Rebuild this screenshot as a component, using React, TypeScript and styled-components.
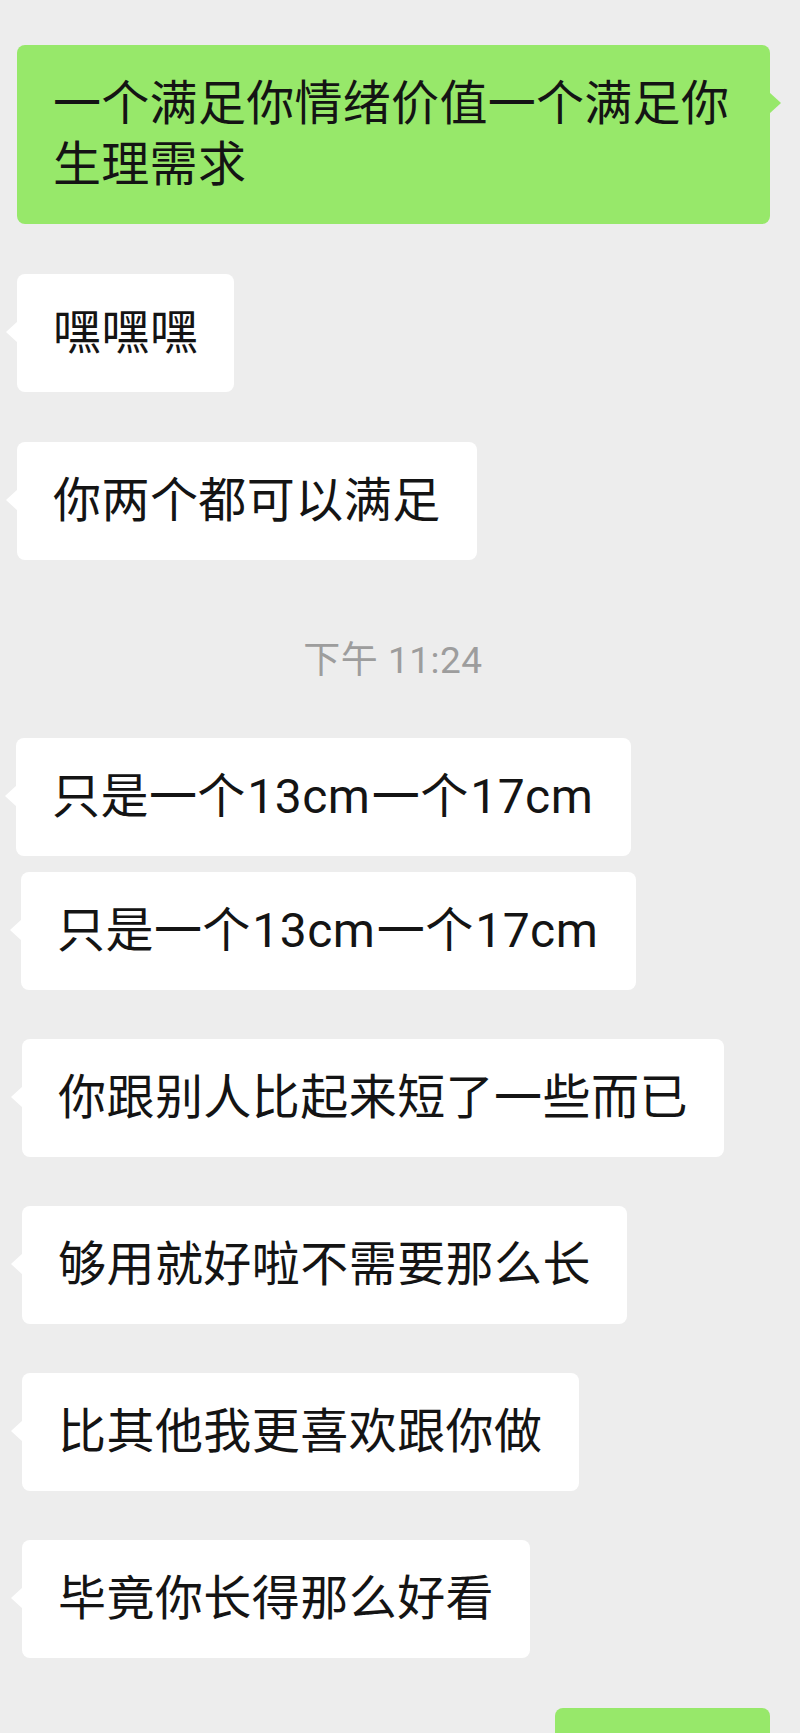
import React from "react";
import styled, { createGlobalStyle, css } from "styled-components";

const GlobalStyle = createGlobalStyle`
  html, body {
    margin: 0;
    padding: 0;
    background: #ededed;
    overflow: hidden;
  }
  body {
    font-family: Roboto, "Noto Sans CJK SC", "Noto Sans", sans-serif;
    -webkit-font-smoothing: antialiased;
  }
`;

const Chat = styled.main`
  display: flex;
  flex-direction: column;
  height: 1733px;
  box-sizing: border-box;
  padding-top: 45px;
  overflow: hidden;
  background: #ededed;
`;

const Row = styled.div<{ $mine?: boolean; $top: number; $indent?: number }>`
  display: flex;
  flex-shrink: 0;
  justify-content: ${(p) => (p.$mine ? "flex-end" : "flex-start")};
  margin-top: ${(p) => p.$top}px;
  padding-left: ${(p) => p.$indent ?? 17}px;
  padding-right: 30px;
`;

const Bubble = styled.div<{ $mine?: boolean }>`
  position: relative;
  box-sizing: border-box;
  max-width: 753px;
  padding: 28px 36px 29px;
  border-radius: 8px;
  background: ${(p) => (p.$mine ? "#97e86a" : "#ffffff")};
  color: #141414;
  font-size: 48px;
  line-height: 61px;
  font-weight: 400;
  letter-spacing: ${(p) => (p.$mine ? "0.3px" : "0.45px")};

  &::before {
    content: "";
    position: absolute;
    top: 47px;
    width: 0;
    height: 0;
    border-top: 11px solid transparent;
    border-bottom: 11px solid transparent;
    ${(p) =>
      p.$mine
        ? css`
            right: -11px;
            border-left: 12px solid #97e86a;
          `
        : css`
            left: -11px;
            border-right: 12px solid #ffffff;
          `}
  }
`;

const Latin = styled.span`
  margin: 0 1.5px;
  letter-spacing: 0.45px;
`;

const PartialBubble = styled(Bubble)`
  width: 215px;
  height: 118px;
`;

const Stamp = styled.div`
  flex-shrink: 0;
  margin-top: 81px;
  text-align: center;
  padding-right: 14px;
  font-size: 37px;
  line-height: 40px;
  color: #9d9d9d;
  letter-spacing: 0.5px;
`;

type Msg = { text: string; mine?: boolean; top: number; indent?: number };

const before: Msg[] = [
  { text: "一个满足你情绪价值一个满足你生理需求", mine: true, top: 0 },
  { text: "嘿嘿嘿", top: 50 },
  { text: "你两个都可以满足", top: 50 },
];

const after: Msg[] = [
  { text: "只是一个13cm一个17cm", top: 57, indent: 16 },
  { text: "只是一个13cm一个17cm", top: 16, indent: 21 },
  { text: "你跟别人比起来短了一些而已", top: 49, indent: 22 },
  { text: "够用就好啦不需要那么长", top: 49, indent: 22 },
  { text: "比其他我更喜欢跟你做", top: 49, indent: 22 },
  { text: "毕竟你长得那么好看", top: 49, indent: 22 },
];

const renderText = (text: string) =>
  text.split(/([0-9]+cm)/).map((part, i) =>
    /^[0-9]+cm$/.test(part) ? <Latin key={i}>{part}</Latin> : part
  );

const Message = ({ m }: { m: Msg }) => (
  <Row $mine={m.mine} $top={m.top} $indent={m.indent}>
    <Bubble $mine={m.mine}>{renderText(m.text)}</Bubble>
  </Row>
);

export default function App() {
  return (
    <>
      <GlobalStyle />
      <Chat>
        {before.map((m, i) => (
          <Message key={`b${i}`} m={m} />
        ))}
        <Stamp>下午 11:24</Stamp>
        {after.map((m, i) => (
          <Message key={`a${i}`} m={m} />
        ))}
        <Row $mine $top={50}>
          <PartialBubble $mine />
        </Row>
      </Chat>
    </>
  );
}
